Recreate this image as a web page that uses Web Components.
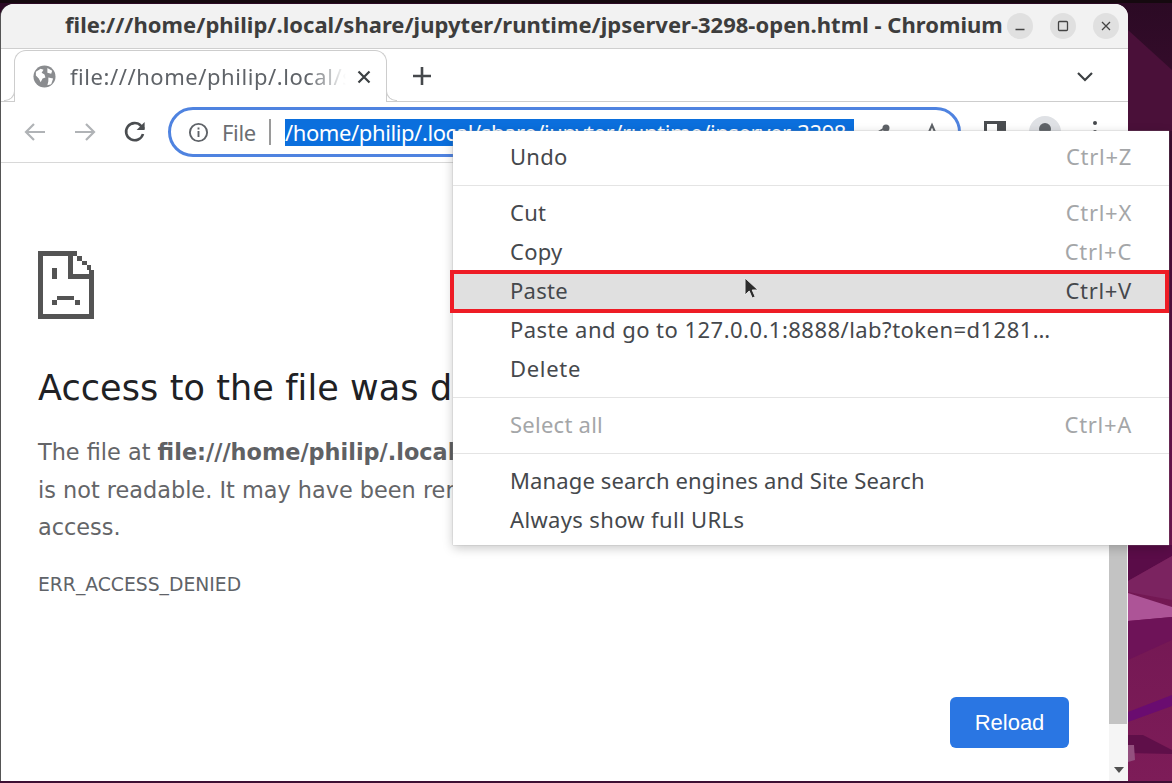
<!DOCTYPE html>
<html>
<head>
<meta charset="utf-8">
<title>Access denied</title>
<style>
  html, body { margin: 0; padding: 0; width: 1172px; height: 783px; overflow: hidden; background: #12080f; }
</style>
</head>
<body>
<desktop-shell>
  <browser-window>
    <title-bar slot="title">file:///home/philip/.local/share/jupyter/runtime/jpserver-3298-open.html - Chromium</title-bar>
    <tab-strip slot="tabs" label="file:///home/philip/.local/share"></tab-strip>
    <nav-toolbar slot="nav" url="/home/philip/.local/share/jupyter/runtime/jpserver-3298-open.html"></nav-toolbar>
    <error-page slot="page"></error-page>
  </browser-window>
  <context-menu slot="overlay">
    <menu-row shortcut="Ctrl+Z">Undo</menu-row>
    <menu-sep></menu-sep>
    <menu-row shortcut="Ctrl+X">Cut</menu-row>
    <menu-row shortcut="Ctrl+C">Copy</menu-row>
    <menu-row shortcut="Ctrl+V" active>Paste</menu-row>
    <menu-row style="letter-spacing:.47px">Paste and go to 127.0.0.1:8888/lab?token=d1281…</menu-row>
    <menu-row style="letter-spacing:.7px">Delete</menu-row>
    <menu-sep></menu-sep>
    <menu-row shortcut="Ctrl+A" disabled>Select all</menu-row>
    <menu-sep></menu-sep>
    <menu-row style="letter-spacing:.13px">Manage search engines and Site Search</menu-row>
    <menu-row style="letter-spacing:.35px">Always show full URLs</menu-row>
  </context-menu>
</desktop-shell>

<script>
const UI_FONT = `"Noto Sans", "Open Sans", sans-serif`

class DesktopShell extends HTMLElement {
  constructor () {
    super()
    this.attachShadow({ mode: 'open' })
  }

  connectedCallback () {
    this.shadowRoot.innerHTML = `
      <style>
        :host { display: block; position: relative; width: 1172px; height: 783px; overflow: hidden; }
        .wall { position: absolute; inset: 0; width: 1172px; height: 783px; }
        .frame { padding: 4px 44px 2px 1px; height: 777px; position: relative; }
      </style>
      <svg class="wall" viewBox="0 0 1172 783">
        <defs>
          <linearGradient id="w" x1="0" y1="0" x2="0" y2="1">
            <stop offset="0" stop-color="#2b0a24"/>
            <stop offset=".22" stop-color="#400d33"/>
            <stop offset=".6" stop-color="#6c1550"/>
            <stop offset="1" stop-color="#7d1c58"/>
          </linearGradient>
        </defs>
        <rect width="1172" height="783" fill="url(#w)"/>
        <rect width="1172" height="3" fill="#15090f"/>
        <polygon points="1128,30 1172,70 1172,131 1128,131" fill="#4a1039"/>
        <polygon points="1128,545 1172,545 1172,556 1128,581" fill="#5a0c48"/>
        <polygon points="1128,581 1172,556 1172,600 1128,592" fill="#7b2360"/>
        <polygon points="1128,593 1172,607 1172,617 1128,621" fill="#ad5497"/>
        <polygon points="1128,621 1172,617 1172,640 1128,660" fill="#6e1358"/>
        <polygon points="1128,712 1172,695 1172,706 1128,722" fill="#6a0c70"/>
        <polygon points="1128,735 1143,735 1172,750 1172,754 1128,753" fill="#5f0f49"/>
        <polygon points="1128,745 1134,745 1135,760 1128,762" fill="#94507f"/>
        <rect y="781" width="1172" height="2" fill="#3d0f33"/>
      </svg>
      <div class="frame"><slot></slot></div>
      <slot name="overlay"></slot>
    `
  }
}

class BrowserWindow extends HTMLElement {
  constructor () {
    super()
    this.attachShadow({ mode: 'open' })
  }

  connectedCallback () {
    this.shadowRoot.innerHTML = `
      <style>
        :host {
          display: flex;
          flex-direction: column;
          width: 1127px;
          height: 777px;
          background: #fff;
          border-radius: 13px 13px 0 0;
          overflow: hidden;
          box-shadow: -1px 0 0 #555;
          font-family: ${UI_FONT};
        }
      </style>
      <slot name="title"></slot>
      <slot name="tabs"></slot>
      <slot name="nav"></slot>
      <slot name="page"></slot>
    `
  }
}

class TitleBar extends HTMLElement {
  constructor () {
    super()
    this.attachShadow({ mode: 'open' })
  }

  connectedCallback () {
    this.shadowRoot.innerHTML = `
      <style>
        :host {
          display: flex;
          align-items: center;
          flex: none;
          height: 45px;
          box-sizing: border-box;
          background: #f2f2f2;
          border-bottom: 1px solid #cfcfcf;
          padding: 0 9px 0 64px;
        }
        .text {
          flex: 1;
          white-space: nowrap;
          font-size: 22px;
          font-weight: 700;
          letter-spacing: 0.02px;
          color: #3d3d3d;
          padding-bottom: 4px;
        }
        .btns { display: flex; gap: 17px; }
        .btn {
          width: 26px;
          height: 26px;
          border-radius: 50%;
          background: #e0e0e0;
          display: flex;
          align-items: center;
          justify-content: center;
        }
        svg { width: 12px; height: 12px; fill: none; stroke: #444; stroke-width: 1.3; }
      </style>
      <span class="text"><slot></slot></span>
      <div class="btns">
        <div class="btn"><svg viewBox="0 0 12 12"><path d="M1.5 9.5h9"/></svg></div>
        <div class="btn"><svg viewBox="0 0 12 12"><rect x="1.5" y="1.5" width="9" height="9" rx="1"/></svg></div>
        <div class="btn"><svg viewBox="0 0 12 12"><path d="M2 2l8 8M10 2l-8 8"/></svg></div>
      </div>
    `
  }
}

class TabStrip extends HTMLElement {
  constructor () {
    super()
    this.attachShadow({ mode: 'open' })
  }

  connectedCallback () {
    const label = this.getAttribute('label') || ''
    this.shadowRoot.innerHTML = `
      <style>
        :host {
          display: flex;
          align-items: flex-end;
          flex: none;
          height: 53px;
          box-sizing: border-box;
          padding: 0 34px 0 13px;
          background: #fff;
          border-bottom: 1px solid #cdcdcd;
        }
        .tab {
          position: relative;
          display: flex;
          align-items: center;
          width: 373px;
          height: 52px;
          margin-bottom: -1px;
          box-sizing: border-box;
          padding: 0 15px 0 18px;
          background: #fff;
          border: 1px solid #cdcdcd;
          border-bottom: none;
          border-radius: 12px 12px 0 0;
        }
        .tab::before, .tab::after {
          content: '';
          position: absolute;
          bottom: 1px;
          width: 10px;
          height: 10px;
          background: #fff;
          border-bottom: 1px solid #cdcdcd;
        }
        .tab::before { left: -11px; border-right: 1px solid #cdcdcd; border-bottom-right-radius: 10px; }
        .tab::after { right: -11px; border-left: 1px solid #cdcdcd; border-bottom-left-radius: 10px; }
        .globe { width: 23px; height: 23px; flex: none; margin-right: 14px; }
        .label {
          flex: 1;
          overflow: hidden;
          white-space: nowrap;
          font-size: 22px;
          letter-spacing: 0.55px;
          color: #5f6368;
          padding-bottom: 2px;
          -webkit-mask-image: linear-gradient(90deg, #000 86%, transparent 100%);
        }
        .x { width: 14px; height: 14px; flex: none; margin-left: 11px; fill: none; stroke: #3c4043; stroke-width: 2.2; }
        .plus { width: 20px; height: 20px; margin: 0 0 15px 25px; fill: none; stroke: #45484c; stroke-width: 2.6; }
        .chev { width: 18px; height: 12px; margin: 0 0 18px auto; fill: none; stroke: #3c4043; stroke-width: 2.2; }
      </style>
      <div class="tab">
        <svg class="globe" viewBox="0 0 24 24">
          <circle cx="12" cy="12" r="11.5" fill="#8a8c8f"/>
          <path d="M3 7l5-3 3 1-2 3 3 2 1 3-3 1-2 4-2-4-3-3zM15 3l5 3-1 3-4-1zM16 13l5 1-2 6-4 1 1-4z" fill="#fff"/>
        </svg>
        <span class="label">${label}</span>
        <svg class="x" viewBox="0 0 14 14"><path d="M1.5 1.5l11 11M12.5 1.5l-11 11"/></svg>
      </div>
      <svg class="plus" viewBox="0 0 20 20"><path d="M10 1v18M1 10h18"/></svg>
      <svg class="chev" viewBox="0 0 18 12"><path d="M2 2l7 7 7-7"/></svg>
    `
  }
}

class NavToolbar extends HTMLElement {
  constructor () {
    super()
    this.attachShadow({ mode: 'open' })
  }

  connectedCallback () {
    const url = this.getAttribute('url') || ''
    this.shadowRoot.innerHTML = `
      <style>
        :host {
          display: flex;
          align-items: center;
          flex: none;
          height: 61px;
          box-sizing: border-box;
          padding: 0 0 0 9px;
          background: #fff;
          border-bottom: 1px solid #d8d8d8;
        }
        .ico { width: 50px; height: 50px; flex: none; display: flex; align-items: center; justify-content: center; }
        .ico svg { width: 26px; height: 26px; fill: none; stroke-width: 2.2; }
        .off { stroke: #b0b3b6; }
        .on { stroke: #4a4d50; }
        .omni {
          display: flex;
          align-items: center;
          width: 793px;
          height: 50px;
          flex: none;
          box-sizing: border-box;
          margin: 0 9px 0 8px;
          padding: 0 8px 0 17px;
          border: 3px solid #4f83e0;
          border-radius: 25px;
          font-size: 22px;
        }
        .info { width: 21px; height: 21px; flex: none; margin-right: 13px; fill: none; stroke: #5f6368; stroke-width: 1.9; }
        .file { color: #6b6e72; letter-spacing: -0.3px; }
        .bar { width: 2px; height: 26px; background: #9a9a9a; margin: 0 14px 0 13px; flex: none; }
        .sel {
          width: 569px;
          height: 27px;
          line-height: 26px;
          flex: none;
          overflow: hidden;
          white-space: nowrap;
          background: #0b6fdd;
          color: #fff;
          letter-spacing: -0.4px;
        }
        .omni svg.act { width: 26px; height: 26px; flex: none; margin-top: 5px; fill: none; stroke: #5f6368; stroke-width: 2; }
        .share { margin-left: 12px; }
        .star { margin-left: 27px; }
        .avatar { width: 32px; height: 32px; border-radius: 50%; background: #dfe1e5; display: flex; align-items: center; justify-content: center; }
        .avatar i { width: 12px; height: 12px; border-radius: 50%; background: #5f6368; margin-bottom: 6px; }
        .dots { display: flex; flex-direction: column; gap: 5px; }
        .dots i { width: 4px; height: 4px; border-radius: 50%; background: #45484c; }
      </style>
      <div class="ico"><svg class="off" viewBox="0 0 26 26"><path d="M23 13H4M12 5l-8 8 8 8"/></svg></div>
      <div class="ico"><svg class="off" viewBox="0 0 26 26"><path d="M3 13h19M14 5l8 8-8 8"/></svg></div>
      <div class="ico"><svg class="on" viewBox="0 0 26 26" style="stroke-width:2.6"><path d="M21 15a8.600 8.600 0 1 1-2-8.200L22 10"/><path d="M22.600 3v8h-8" style="fill:#4a4d50;stroke:none"/></svg></div>
      <div class="omni">
        <svg class="info" viewBox="0 0 21 21"><circle cx="10.500" cy="10.500" r="8.600"/><path d="M10.500 9v6M10.500 5.500v2"/></svg>
        <span class="file">File</span>
        <span class="bar"></span>
        <span class="sel">${url}</span>
        <svg class="act share" viewBox="0 0 26 26"><circle cx="20" cy="6" r="2.500" fill="#5f6368"/><circle cx="6" cy="13" r="2.500" fill="#5f6368"/><circle cx="20" cy="20" r="2.500" fill="#5f6368"/><path d="M7 13l12-7M7 13l12 7"/></svg>
        <svg class="act star" viewBox="0 0 26 26"><path d="M13 3l3 7 7.500.7-5.600 5 1.700 7.300L13 19.200l-6.600 3.800 1.700-7.300-5.600-5L10 10z"/></svg>
      </div>
      <div class="ico"><svg class="on" viewBox="0 0 26 26" style="fill:#4a4d50;stroke:none"><path d="M2 2h22v22H2zM5 5v16h10V5z"/></svg></div>
      <div class="ico"><div class="avatar"><i></i></div></div>
      <div class="ico"><div class="dots"><i></i><i></i><i></i></div></div>
    `
  }
}

class ErrorPage extends HTMLElement {
  constructor () {
    super()
    this.attachShadow({ mode: 'open' })
  }

  connectedCallback () {
    this.shadowRoot.innerHTML = `
      <style>
        :host {
          display: flex;
          flex: 1;
          min-height: 0;
          overflow: hidden;
          background: #fff;
          font-family: "DejaVu Sans", sans-serif;
        }
        .main {
          flex: 1;
          min-width: 0;
          display: flex;
          flex-direction: column;
          box-sizing: border-box;
          padding: 88px 40px 33px 37px;
          overflow: hidden;
        }
        .sad { display: block; width: 56px; height: 68px; flex: none; }
        h1 {
          margin: 50px 0 0;
          font-size: 35px;
          letter-spacing: .1px;
          line-height: 38px;
          font-weight: 400;
          color: #202124;
          white-space: nowrap;
        }
        p {
          margin: 27px 0 0;
          font-size: 22.400px;
          line-height: 37.600px;
          color: #646568;
          white-space: nowrap;
        }
        b { color: #5f6164; }
        .code { margin-top: 26px; font-size: 18.750px; line-height: 24px; color: #5f6368; }
        .reload {
          margin: auto 0 0 auto;
          width: 119px;
          height: 51px;
          border-radius: 6px;
          background: #2a76e3;
          color: #fff;
          font: 22px "Liberation Sans", sans-serif;
          display: flex;
          align-items: center;
          justify-content: center;
          flex: none;
        }
        .scroll { width: 19px; flex: none; background: #f5f5f5; display: flex; flex-direction: column; }
        .thumb { height: 561px; width: 18px; background: #c3c3c3; }
        .arrow {
          margin: auto auto 8px;
          width: 0;
          height: 0;
          border-left: 5px solid transparent;
          border-right: 5px solid transparent;
          border-top: 6px solid #505050;
        }
      </style>
      <div class="main">
        <svg class="sad" viewBox="0 0 168 203" fill="#545454" shape-rendering="crispEdges">
          <path d="M0 0h118v14h-104v175h140V83H90V14h14v55h64v134H0z"/>
          <path d="M118 14h14v14h-14zM132 28h14v14h-14zM146 42h14v14h-14zM154 55h14v14h-14z"/>
          <path d="M42 50h16v33H42zM58 133h50v14H58zM42 147h16v14H42zM111 147h16v14h-16z"/>
        </svg>
        <h1>Access to the file was denied</h1>
        <p>The file at <b>file:///home/philip/.local/share/jupyter/runtime/jpserver-3298-open.html</b><br>is not readable. It may have been removed, moved or file permissions may be preventing<br>access.</p>
        <div class="code">ERR_ACCESS_DENIED</div>
        <div class="reload">Reload</div>
      </div>
      <div class="scroll"><div class="thumb"></div><div class="arrow"></div></div>
    `
  }
}

class ContextMenu extends HTMLElement {
  constructor () {
    super()
    this.attachShadow({ mode: 'open' })
  }

  connectedCallback () {
    this.shadowRoot.innerHTML = `
      <style>
        :host {
          display: block;
          position: absolute;
          left: 453px;
          top: 131px;
          width: 716px;
          box-sizing: border-box;
          padding: 7px 0 5px;
          background: #fff;
          box-shadow: 0 0 1px #999, 0 3px 10px rgba(0, 0, 0, .22);
          font-family: ${UI_FONT};
          letter-spacing: .25px;
        }
        .pointer { position: absolute; left: 291px; top: 146px; width: 16px; height: 24px; }
      </style>
      <slot></slot>
      <svg class="pointer" viewBox="0 0 16 24">
        <path d="M1 1v17l4.200-4 3 7 3-1.300-3-6.700h5.800z" fill="#2c2c2c" stroke="#e8e8e8" stroke-width="1"/>
      </svg>
    `
  }
}

class MenuRow extends HTMLElement {
  constructor () {
    super()
    this.attachShadow({ mode: 'open' })
  }

  connectedCallback () {
    const shortcut = this.getAttribute('shortcut')
    this.shadowRoot.innerHTML = `
      <style>
        :host {
          display: flex;
          align-items: center;
          justify-content: space-between;
          position: relative;
          height: 39px;
          box-sizing: border-box;
          padding: 0 37px 4px 57px;
          font-size: 22px;
          color: #45484c;
          white-space: nowrap;
        }
        :host([active]) { background: #e0e0e0; }
        :host([disabled]) { color: #a4a6a8; }
        .key { color: #a4a6a8; letter-spacing: .7px; }
        :host([active]) .key { color: #45484c; }
        .mark {
          display: none;
          position: absolute;
          left: -3px;
          right: 0;
          top: -2px;
          bottom: -2px;
          border: 4.500px solid #ee1c25;
          border-left-width: 4px;
          pointer-events: none;
        }
        :host([active]) .mark { display: block; }
      </style>
      <span><slot></slot></span>
      ${shortcut ? `<span class="key">${shortcut}</span>` : ''}
      <span class="mark"></span>
    `
  }
}

class MenuSep extends HTMLElement {
  constructor () {
    super()
    this.attachShadow({ mode: 'open' })
  }

  connectedCallback () {
    this.shadowRoot.innerHTML = `
      <style>
        :host { display: flex; align-items: center; height: 17px; }
        hr { width: 100%; height: 1px; margin: 0; border: 0; background: #e4e4e4; }
      </style>
      <hr>
    `
  }
}

customElements.define('desktop-shell', DesktopShell)
customElements.define('browser-window', BrowserWindow)
customElements.define('title-bar', TitleBar)
customElements.define('tab-strip', TabStrip)
customElements.define('nav-toolbar', NavToolbar)
customElements.define('error-page', ErrorPage)
customElements.define('context-menu', ContextMenu)
customElements.define('menu-row', MenuRow)
customElements.define('menu-sep', MenuSep)
</script>
</body>
</html>
